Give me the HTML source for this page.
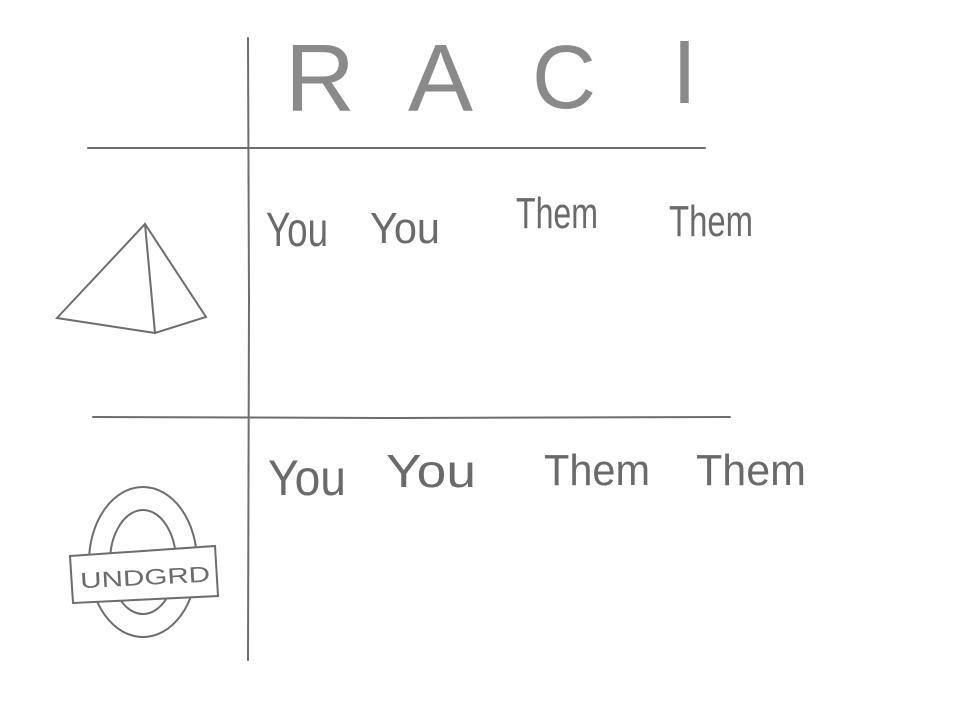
<!DOCTYPE html>
<html><head><meta charset="utf-8"><style>
html,body{margin:0;padding:0;background:#fff;}
svg{display:block}
text{font-family:"Liberation Sans",sans-serif;fill:#6a6a6a;}
.big{fill:#8a8a8a;}
</style></head><body>
<svg width="955" height="716" viewBox="0 0 955 716" xmlns="http://www.w3.org/2000/svg">
<g stroke="#6d6d6d" stroke-width="2" fill="none" stroke-linecap="round">
<path d="M248 38 L249 300 L248 660"/>
<path d="M88 148 L400 148 L705 148"/>
<path d="M93 417 L400 418 L730 417"/>
<path d="M57 318 L145 224 L206 317 L155 333 Z"/>
<path d="M145 224 L155 333"/>
<ellipse cx="143" cy="562" rx="54" ry="75"/>
<ellipse cx="143" cy="562" rx="33" ry="52"/>
<path d="M70 556 L215 546 L218 596 L73 603 Z" fill="#fff"/>
</g>
<g>
<text class="big" x="285" y="111" font-size="96" textLength="70" lengthAdjust="spacingAndGlyphs">R</text>
<text class="big" x="408" y="111" font-size="96" textLength="65" lengthAdjust="spacingAndGlyphs">A</text>
<text class="big" x="532" y="108" font-size="90" textLength="64" lengthAdjust="spacingAndGlyphs">C</text>
<text class="big" x="672" y="103" font-size="90">I</text>
<text x="266" y="246" font-size="48" textLength="62" lengthAdjust="spacingAndGlyphs">You</text>
<text x="370" y="243" font-size="44" textLength="70" lengthAdjust="spacingAndGlyphs">You</text>
<text x="516" y="228" font-size="44" textLength="82" lengthAdjust="spacingAndGlyphs">Them</text>
<text x="669" y="236" font-size="44" textLength="84" lengthAdjust="spacingAndGlyphs">Them</text>
<text x="268" y="495" font-size="50" textLength="78" lengthAdjust="spacingAndGlyphs">You</text>
<text x="386" y="487" font-size="46" textLength="90" lengthAdjust="spacingAndGlyphs">You</text>
<text x="544" y="485" font-size="44" textLength="106" lengthAdjust="spacingAndGlyphs">Them</text>
<text x="696" y="485" font-size="44" textLength="110" lengthAdjust="spacingAndGlyphs">Them</text>
<text x="80" y="585" font-size="22" textLength="130" lengthAdjust="spacingAndGlyphs" transform="rotate(-3 143 575)">UNDGRD</text>
</g>
</svg>
</body></html>
